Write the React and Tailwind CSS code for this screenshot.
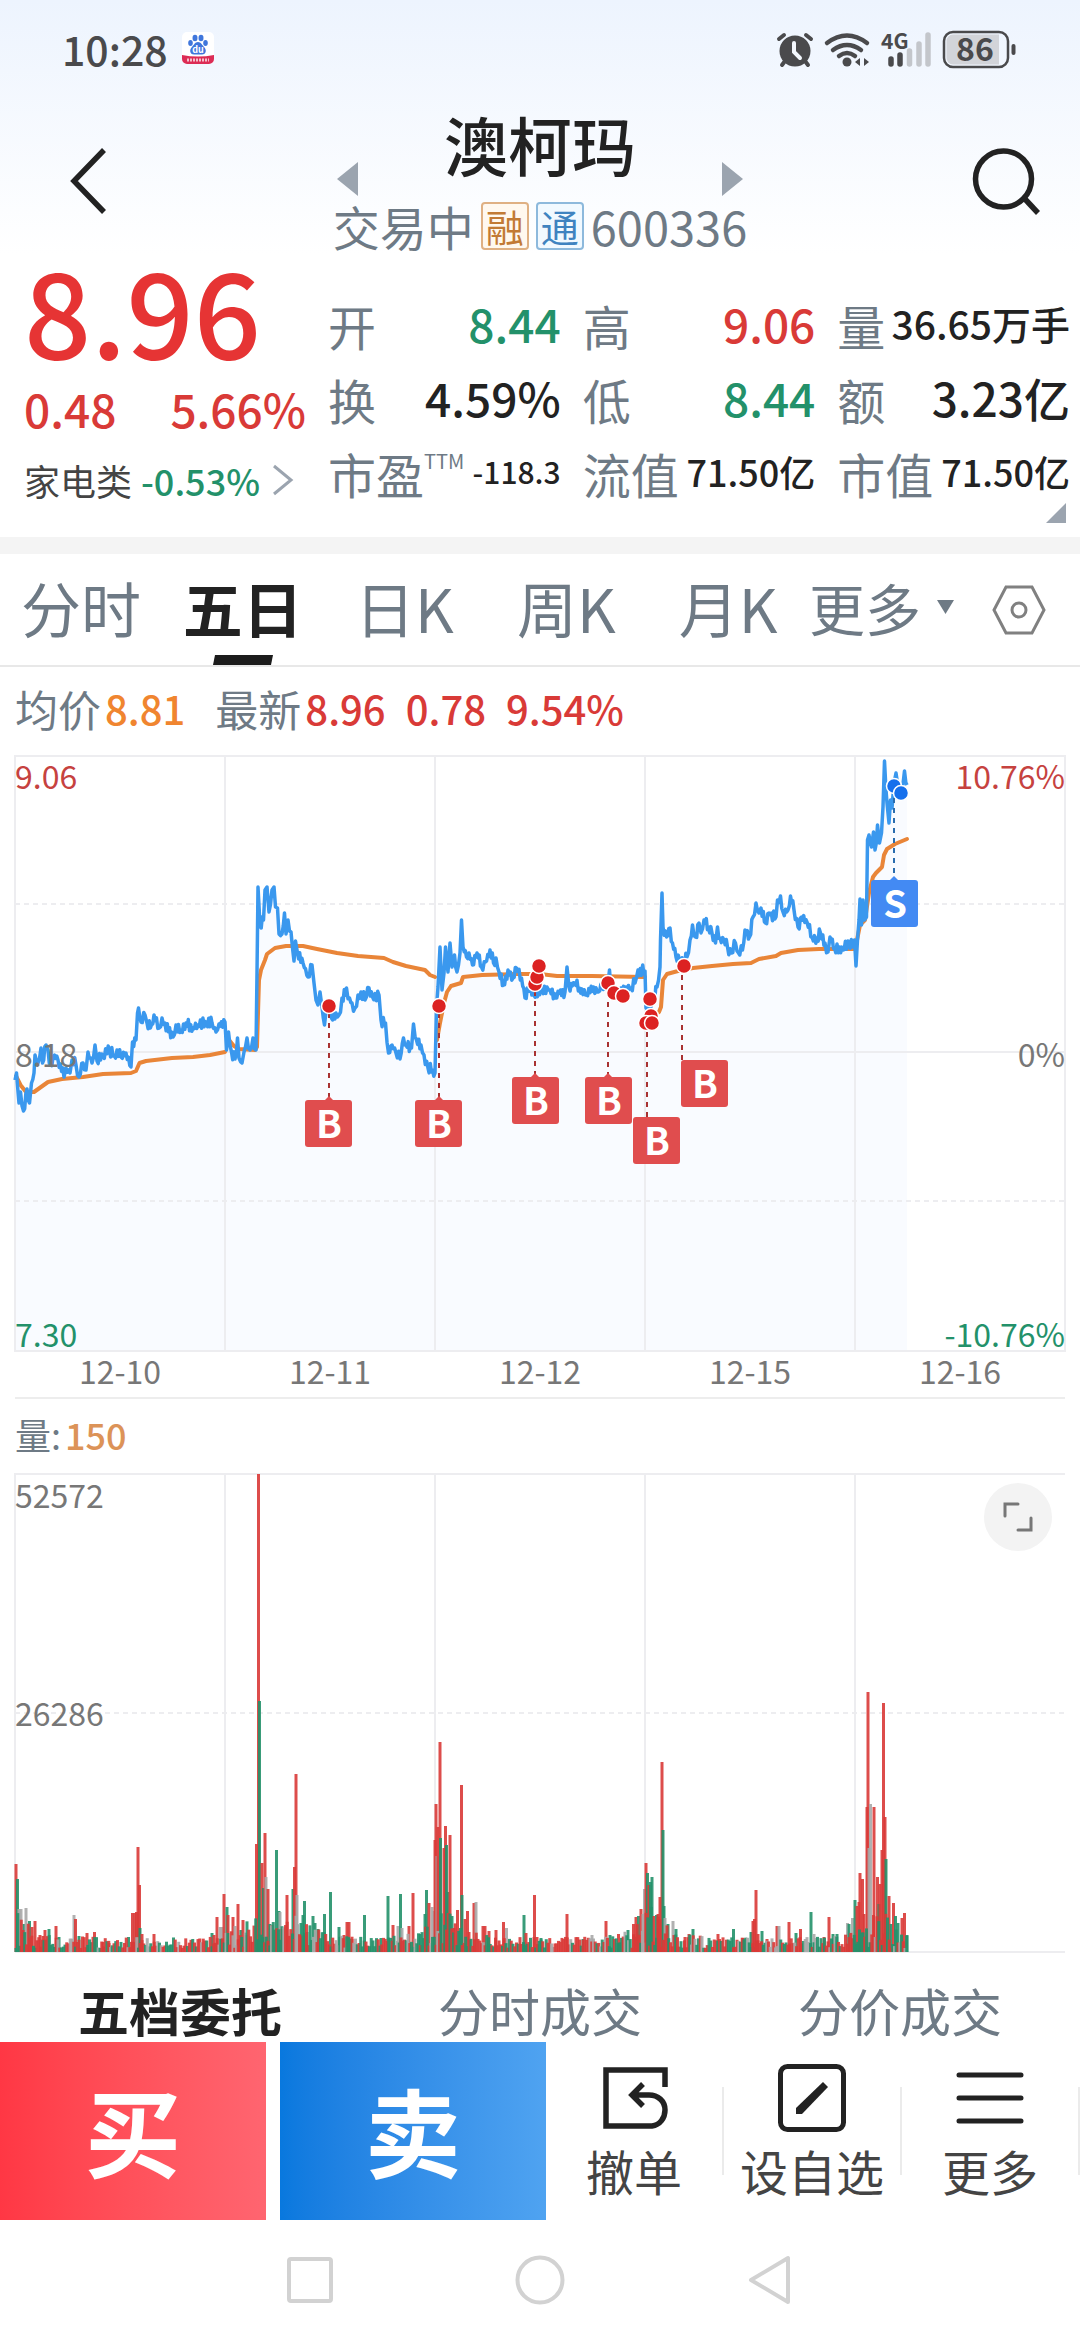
const RED = "#d93a37";
const GREEN = "#23916a";
const GRAY = "#a8a8a8";

const quotes = [
  { label: "开", value: "8.44", style: "text-[46px] text-[#23916a]" },
  { label: "高", value: "9.06", style: "text-[46px] text-[#d93a37]" },
  { label: "量", value: "36.65万手", style: "text-[39px] text-[#222222]" },
  { label: "换", value: "4.59%", style: "text-[46px] text-[#222222]" },
  { label: "低", value: "8.44", style: "text-[46px] text-[#23916a]" },
  { label: "额", value: "3.23亿", style: "text-[46px] text-[#222222]" },
  { label: "市盈", sup: "TTM", value: "-118.3", style: "text-[30px] text-[#222222]" },
  { label: "流值", value: "71.50亿", style: "text-[36px] text-[#222222]" },
  { label: "市值", value: "71.50亿", style: "text-[36px] text-[#222222]" },
];

const periods = ["分时", "五日", "日K", "周K", "月K"];
const dates = ["12-10", "12-11", "12-12", "12-15", "12-16"];
const gridX = [15, 225, 435, 645, 855, 1065];

const priceKeys =
  "15,324 16.5,317 19,347 20.5,336 23.5,355 27,333 29.5,347 31.5,327 34,317 35,299 38,307 41,292 42.5,307 46,289 48,294 50.5,309 54.5,299 58,304 64,321 66,312 70,317 72,304 76,309 79,321 83,307 86,314 88,296 92,307 95,289 97,305 103,299 109.5,294 114,299 117,294 121,301 126,297 131,311 132.5,286 136,284 137.5,257 138.5,252 141,266 145,259 147,267 151.5,269 154,259 159,272 162,262 165,267 173,281 176,269 181,274 186,267 193,272 198,269 206.5,267 212,267 216,276 219,268 225,266 " +
  "226.5,294 228.5,276 231.5,296 235,303 237.5,282 239,302 242,307 244,296 247,282 250,294 253,282 256,294 257,217 258,131 260,169 263.5,164 265,134 267,131 269,156 272,134 274,131 275.5,151 277.5,152 279,178 282,178 284.5,157 286,178 288,164 291,176 294,205 295.5,185 297.5,197 303,207 308,221 312,209 314,227 316,244 318,249 320,236 322,251 324.5,269 326.5,251 329,244 331.5,262 336,257 339,259 342,242 346.5,232 349.5,242 352,247 355,252 358,239 361,236 365,244 369,232 372.5,241 379,239 381,264 385.5,267 388.5,297 392,289 396,297 400,303 403.5,282 406,289 411.5,292 413.5,268 416.5,284 421,289 424,299 428,312 432.5,314 435,317 " +
  "436.5,251 438,231 440,191 442,234 444,217 445.5,191 448,216 450,187 452,211 454.5,199 457,216 460,197 461.5,164 463,191 466.5,201 469,197 472.5,209 477,197 481.5,211 485.5,206 490,194 493.5,207 496,202 499,216 503.5,229 508,214 513,222 516.5,212 521.5,222 525,242 528.5,231 534,239 542,234 547,231 550,234 555.5,242 560.5,234 565,236 567,211 569,231 574.5,227 579.5,232 586.5,239 593.5,231 598.5,236 602,229 607,224 609.5,214 611,234 616.5,239 621,232 626,231 631,232 635,227 638,214 645,215 " +
  "646,252 649.5,251 653.5,247 657,231 660,211 660.5,184 662,137 663,171 666.5,181 670,172 672.5,187 676,201 679.5,204 683.5,207 687,201 690,184 692.5,169 695.5,181 699,167 701,177 704,164 708.5,171 712,177 715.5,187 717.5,171 720,182 724,184 727.5,191 731.5,197 735.5,187 738.5,197 742.5,194 745,174 749.5,181 753,161 756,147 759,157 761,152 765.5,167 769,157 776,161 777.5,144 780.5,140 783,156 788,154 790.5,140 794,154 798,171 801.5,161 807,166 812,181 817,182 820.5,177 825,187 828,196 830,181 834.5,192 839.5,191 843,194 849,186 852.5,191 854.5,184 " +
  "856,210 857.5,184 859,164 860,143 861.5,169 863,144 864.5,164 866.5,161 867.5,84 869,79 871.5,91 873.5,76 875,94 877.5,69 879.5,87 881.5,77 883,51 884.5,5 886,34 887,47 889,67 890.5,44 892,52 894,27 896,17 898,31 901.5,34 904.5,15 907,29";

const averages = [
  "16,320 20.5,329 26,336 34,336 48,326 62,323 83,321 103,318 131,317 136,315 139.5,307 146,305 172,302 193,301 210,299 225,296",
  "229,284 234,290 239,293 255,294 257,291 259,224 261,214 265,204 267,198 275,192 286,190 303,190 317,193 337,197 358,200 384,202 393,206 406,210 425,214 430,219 435,221",
  "437,284 440,267 444,247 447,236 451,230 461,227 463,221 482,219 517,218 540,218 557,220 592,220 645,221",
  "646,264 659,256 661,251 663,224 667,218 678,215 693,212 712,210 733,208 751,207 759,203 776,200 781,197 798,194 819,193 856,193",
  "857,184 860,169 865,164 869,137 873,121 876,117 882,111 884,99 887,93 895,88 907,83",
];

// box position, pin x, pin start y, and whether the box has a tip
const trades = [
  { t: "B", x: 305, y: 344, pin: 329, from: 257, tip: true },
  { t: "B", x: 415, y: 344, pin: 439, from: 257, tip: true },
  { t: "B", x: 512, y: 321, pin: 535, from: 235, tip: true },
  { t: "B", x: 585, y: 321, pin: 608, from: 246, tip: true },
  { t: "B", x: 633, y: 361, pin: 647, from: 276 },
  { t: "B", x: 681, y: 304, pin: 682, from: 219 },
  { t: "S", x: 871, y: 124, pin: 894, from: 42, tip: true },
];

const buyDots = [
  [329, 250], [439, 250], [535, 228], [537, 221], [539, 210], [608, 227], [614, 237],
  [623, 240], [650, 243], [651, 260], [646, 267], [652, 267], [684, 210],
];
const sellDots = [[894, 30], [901, 37]];

const spikes = `16 88 r,17.5 73 g,19 43 n,21 43 n,24 28 g,26 44 n,29.5 31 g,32 25 r,35 31 r,40 17 r,43 16 r,45 22 r,49 23 g,56 26 r,59 15 g,74 37 n,75.5 33 r,79 16 g,87 19 r,94.5 20 r,103 10 r,109 9 r,128.5 15 g,132.5 39 r,135 39 r,136.5 40 r,138 105 r,139.5 67 r,140 24 g,142 18 r,154 18 r,
212 19 g,214 17 r,217 35 r,220 25 n,222 25 n,224 58 r,227 45 g,228 37 r,233 35 r,235 26 n,238 48 r,241 22 g,243 32 r,246 17 r,256.5 108 r,258.5 478 r,259.5 251 g,262 89 r,263.5 64 g,265 119 r,266 75 n,268 63 r,270 28 g,272 27 r,276.5 102 g,279 41 g,280 40 n,282 23 r,287 57 r,293 63 g,294.5 85 r,296 178 r,297 57 n,301 29 g,304.5 51 g,307 20 g,313 36 g,315 29 g,318 23 g,324.5 38 g,330.5 60 g,339 25 g,344 17 r,347 30 r,349 30 r,352 13 r,364.5 37 g,381 14 g,388 56 g,393 27 r,398 26 n,400.5 58 g,402 24 n,409 26 r,413 59 r,420 18 g,425 38 g,426.5 62 g,429 49 r,432 45 n,434 41 n,
435 112 r,436 148 r,437 96 n,438 125 r,440 210 r,440.5 114 g,444 104 r,445.5 126 r,446.5 107 g,448 60 g,450 117 r,452 36 g,454 24 r,457.5 42 r,461.5 167 r,462 57 g,465 33 r,467.5 41 r,469 20 r,474 49 r,476 50 n,483 26 r,485 26 r,489 21 r,496 22 r,503.5 30 r,506.5 24 n,524 37 g,526 19 r,534.5 57 r,537 15 r,541 14 g,567 38 r,583 13 g,592 17 n,606 31 r,610 17 g,618.5 18 r,623 14 r,628 22 g,633.5 28 r,636 35 r,638.5 36 g,641 43 r,643 38 n,
644.5 63 n,646 89 r,647.5 79 g,649 67 r,650.5 70 g,652 75 g,653.5 36 r,656.5 37 g,658 38 r,660 55 r,662 190 r,663 122 g,664 46 g,665 34 n,668 28 g,673 31 n,676 23 g,685 15 r,689 18 r,693 23 g,718 18 r,733.5 23 g,743 14 r,751 20 g,753 31 r,754.5 33 r,756 62 r,758 18 r,762 21 g,767 13 r,777 26 r,779 26 n,789 30 r,796 19 g,800.5 23 r,811 40 g,814 18 n,824 15 r,829 35 r,833 18 g,837 18 g,847.5 29 n,849 28 g,852.5 34 n,
855 52 g,857 46 r,859 50 r,860 79 r,862.5 73 r,864 38 r,867 145 r,868 260 r,869 104 n,870.5 148 n,874 145 r,877.5 75 r,879 48 g,880 68 r,882 102 r,883.5 249 r,885 135 r,886 93 g,889 56 r,891 28 g,893.5 49 r,895.5 36 g,898 29 g,902 34 r,904.5 39 r,907 17 g`
  .split(",")
  .map((s) => {
    const [x, h, c] = s.trim().split(" ");
    return { x: Number(x), h: Number(h), c };
  });

const barColor = { r: RED, g: GREEN, n: GRAY };

function makeRandom(seed) {
  return () => {
    seed = (seed * 16807) % 2147483647;
    return seed / 2147483647;
  };
}

// adds tick noise between the key prices
function makePrice() {
  const rand = makeRandom(5);
  const keys = priceKeys.split(" ").map((p) => p.split(",").map(Number));
  const out = [];
  keys.forEach(([x, y], i) => {
    out.push(`${x},${y}`);
    const next = keys[i + 1];
    if (!next) return;
    const steps = Math.floor((next[0] - x) / 1.1);
    for (let s = 1; s < steps; s++) {
      const k = s / steps;
      const noise = (s % 2 ? 1 : -1) * (1 + rand() * 5);
      out.push(`${(x + (next[0] - x) * k).toFixed(1)},${(y + (next[1] - y) * k + noise).toFixed(1)}`);
    }
  });
  return out.join(" ");
}

// low background turnover between the spikes, higher around each open
function makeBase() {
  const list = [];
  const rand = makeRandom(17);
  for (let x = 16; x < 908; x += 1.75) {
    const near = Math.min(...[15, 260, 300, 445, 650, 880].map((o) => Math.abs(x - o)));
    const top = 11 + 36 * Math.exp(-near / 16);
    list.push({ x, h: 4 + rand() * top, c: "rgnrgr"[Math.floor(rand() * 6)] });
  }
  return list;
}

const price = makePrice();
const bars = [...spikes, ...makeBase()];

function StatusBar() {
  return (
    <div className="flex h-[100px] items-center justify-between pl-[62px] pr-[64px] text-[#4a4a4c]">
      <div className="flex items-center gap-[14px] pb-1">
        <span className="text-[41px] leading-[60px] font-medium">10:28</span>
        <svg width="32" height="32" viewBox="0 0 32 32" className="overflow-visible">
          <rect width="32" height="32" rx="5" fill="#fff" />
          <g fill="#3f76dc">
            <ellipse cx="13" cy="6" rx="2.5" ry="3.2" />
            <ellipse cx="19" cy="6" rx="2.5" ry="3.2" />
            <ellipse cx="8.5" cy="11" rx="2.3" ry="3" />
            <ellipse cx="23.5" cy="11" rx="2.3" ry="3" />
            <path d="M16 10c3 0 4 3 6.500 5.500 2 2 2 7-2.500 7h-8c-4.500 0-4.500-5-2.500-7C12 13 13 10 16 10z" />
          </g>
          <text x="16" y="20.5" fontSize="9" fontWeight="700" textAnchor="middle" fill="#fff">du</text>
          <path d="M0 23q16 3 32 0v4a5 5 0 0 1-5 5H5a5 5 0 0 1-5-5z" fill="#dc2c55" />
          <path d="M5 28h22" stroke="#fff" strokeWidth="3" strokeDasharray="2 1" opacity=".7" />
        </svg>
      </div>
      <svg width="240" height="40" viewBox="775 31 240 40" fill="none" stroke="#4a4a4c" strokeLinecap="round" className="overflow-visible">
        <circle cx="794" cy="52" r="15.5" fill="#4a4a4c" stroke="none" />
        <path d="M778 40l5-4M810 40l-5-4M784 62l-3 4M804 62l3 4" strokeWidth="4" />
        <path d="M793 44v9l6 6" stroke="#f3f7fd" strokeWidth="4" />
        <path d="M826 44q20-15 40 0M832 51q14-10 28 0M838 57q8-6 16 0" strokeWidth="4.5" />
        <circle cx="846" cy="63" r="4.5" fill="#4a4a4c" stroke="none" />
        <path d="M859 59v8l-5-4zM863 59l5 4-5 4z" fill="#4a4a4c" stroke="none" />
        <text x="880" y="50" fontSize="21" fontWeight="700" fill="#4a4a4c" stroke="none">4G</text>
        <path d="M890 60v5M899 56v9" strokeWidth="5.5" />
        <path d="M908.500 52v13M918 45v20M927 36v29" stroke="#c3c6cb" strokeWidth="5.500" />
        <rect x="943" y="33" width="64" height="35" rx="9" strokeWidth="2.5" />
        <path d="M952 35.500h46v30h-46a6.500 6.500 0 0 1-6.500-6.500V42a6.500 6.500 0 0 1 6.500-6.500z" fill="#d2d4d9" stroke="none" />
        <text x="974" y="62" fontSize="32" fontWeight="700" textAnchor="middle" fill="#4a4a4c" stroke="none">86</text>
        <path d="M1012.500 47v7" strokeWidth="4" />
      </svg>
    </div>
  );
}

function TitleBar() {
  return (
    <header className="flex justify-between px-[38px] pt-[7px]">
      <button aria-label="返回" className="flex w-[96px] items-center justify-start pl-[31px]">
        <svg width="40" height="68" viewBox="0 0 40 68" fill="none" stroke="#222" strokeWidth="5.5">
          <path d="M35 3L5 34l30 31" />
        </svg>
      </button>
      <div className="flex flex-col items-center">
        <div className="flex h-[89px] w-[406px] items-end justify-between">
          <button aria-label="上一只">
            <svg width="21" height="34" viewBox="0 0 21 34" fill="#9ba4af" className="block">
              <path d="M21 0v34L0 17z" />
            </svg>
          </button>
          <h1 className="self-start text-[64px] leading-[72px] font-medium text-[#222222]">澳柯玛</h1>
          <button aria-label="下一只">
            <svg width="21" height="34" viewBox="0 0 21 34" fill="#9ba4af" className="block">
              <path d="M0 0v34l21-17z" />
            </svg>
          </button>
        </div>
        <div className="mt-[2px] flex h-[56px] items-center gap-[7px] text-[47px] leading-[56px] text-[#6e7a85]">
          <span>交易中</span>
          <span className="flex h-[48px] w-[48px] items-center justify-center rounded-[4px] border-2 border-[#dfb083] bg-[#fff8ef] text-[38px] leading-[40px] text-[#c27a35]">融</span>
          <span className="flex h-[48px] w-[48px] items-center justify-center rounded-[4px] border-2 border-[#8db9dc] bg-[#f1f9ff] text-[38px] leading-[40px] text-[#3f83c0]">通</span>
          <span>600336</span>
        </div>
      </div>
      <button aria-label="搜索" className="flex w-[96px] items-center justify-end">
        <svg width="70" height="70" viewBox="0 0 70 70" fill="none" stroke="#222" strokeWidth="5.5">
          <circle cx="31.5" cy="33" r="28" />
          <path d="M52 52l14 15" />
        </svg>
      </button>
    </header>
  );
}

function QuotePanel() {
  return (
    <section className="relative flex h-[283px] pr-[10px]">
      <div className="w-[328px] shrink-0 pl-[24px] pt-[6px] font-medium text-[#e63434]">
        <div className="text-[118px] leading-[96px]">8.96</div>
        <div className="mt-6 flex gap-[54px] text-[46px] leading-[56px] text-[#d93a37]">
          <span>0.48</span>
          <span>5.66%</span>
        </div>
        <a href="#sector" className="mt-5 flex items-center text-[36px] leading-[48px] font-normal text-[#444444]">
          <span>家电类</span>
          <span className="ml-[9px] font-medium text-[#23916a]">-0.53%</span>
          <svg width="22" height="32" viewBox="0 0 22 32" fill="none" stroke="#9ba4af" strokeWidth="3" className="ml-3">
            <path d="M2 2l17 14L2 30" />
          </svg>
        </a>
      </div>
      <dl className="grid flex-1 grid-cols-3 content-start gap-x-[22px] pt-[34px]">
        {quotes.map((q) => (
          <div key={q.label} className="flex h-[74px] items-center justify-between whitespace-nowrap">
            <dt className="flex text-[48px] leading-[56px] text-[#6e7a85]">
              {q.label}
              {q.sup && <span className="text-[20px] leading-[32px]">{q.sup}</span>}
            </dt>
            <dd className={`pb-1 leading-[56px] font-medium ${q.style}`}>{q.value}</dd>
          </div>
        ))}
      </dl>
      <svg width="20" height="20" viewBox="0 0 20 20" fill="#9ba4af" className="absolute right-[14px] bottom-[14px]">
        <path d="M20 0v20H0z" />
      </svg>
    </section>
  );
}

function PeriodTabs() {
  return (
    <nav className="flex h-[113px] border-b-2 border-[#e8e8e8] text-[60px] leading-[72px] text-[#6e7a85]">
      <div className="flex flex-1">
        {periods.map((p) => {
          const active = p === "五日";
          return (
            <button key={p} className={`relative flex-1 pb-[6px] whitespace-nowrap ${active ? "font-bold text-[#222222]" : ""}`}>
              {p}
              {active && (
                <svg width="60" height="10" viewBox="0 0 60 10" className="absolute bottom-0 left-1/2 -translate-x-1/2">
                  <path d="M2 0h58l-2 10H0z" fill="#1c1c1c" />
                </svg>
              )}
            </button>
          );
        })}
      </div>
      <div className="flex w-[271px] items-center justify-between pr-[34px]">
        <button className="flex items-center gap-4 pb-[6px] text-[56px] leading-[72px]">
          更多
          <svg width="17" height="14" viewBox="0 0 17 14" fill="#6e7a85">
            <path d="M0 0h17L8.500 14z" />
          </svg>
        </button>
        <button aria-label="设置">
          <svg width="54" height="50" viewBox="0 0 54 50" fill="none" stroke="#808080" strokeWidth="3" className="block">
            <path d="M14 2h26l12 23-12 23H14L2 25z" />
            <circle cx="27" cy="25" r="7" />
          </svg>
        </button>
      </div>
    </nav>
  );
}

function PriceChart() {
  return (
    <svg viewBox="0 -2 1080 600" className="block w-full overflow-visible" fill="none">
      <polygon points={`15,595 ${price} 907,595`} fill="#f9fbff" />
      <g stroke="#ededf0" strokeWidth="2">
        <rect x="15" y="0" width="1050" height="595" />
        {gridX.slice(1, 5).map((x) => (
          <path key={x} d={`M${x} 0V595`} />
        ))}
        <path d="M15 296H1065" />
        <path d="M15 148H1065M15 445H1065" strokeDasharray="5 4" />
      </g>
      {averages.map((points) => (
        <polyline key={points} points={points} stroke="#e98538" strokeWidth="4" strokeLinejoin="round" strokeLinecap="round" />
      ))}
      <polyline points={price} stroke="#3a98ee" strokeWidth="3.5" strokeLinejoin="round" />
      <g fontSize="32" fill="#777">
        <text x="15" y="33" fill="#c6423f">9.06</text>
        <text x="15" y="311">8.18</text>
        <text x="15" y="591" fill={GREEN}>7.30</text>
        <g textAnchor="end">
          <text x="1065" y="33" fill="#c6423f">10.76%</text>
          <text x="1065" y="311">0%</text>
          <text x="1065" y="591" fill={GREEN}>-10.76%</text>
        </g>
      </g>
      {trades.map((d) => {
        const fill = d.t === "B" ? "#e04d4e" : "#438af3";
        return (
          <g key={d.x}>
            <path d={`M${d.pin} ${d.from}V${d.y}`} stroke={d.t === "B" ? "#a83232" : "#2a6cae"} strokeWidth="2" strokeDasharray="5 5" />
            {d.tip && <path d={`M${d.pin - 4} ${d.y}l4-4 4 4z`} fill={fill} />}
            <rect x={d.x} y={d.y} width="47" height="47" rx="3" fill={fill} />
            <text x={d.x + 24} y={d.y + 38} fontSize="38" fontWeight="700" textAnchor="middle" fill="#fff">{d.t}</text>
          </g>
        );
      })}
      <g stroke="#fff" strokeWidth="1.5">
        {buyDots.map(([x, y], i) => (
          <circle key={i} cx={x} cy={y} r="7.5" fill="#dc2222" />
        ))}
        {sellDots.map(([x, y], i) => (
          <circle key={i} cx={x} cy={y} r="7.5" fill="#1670ec" />
        ))}
      </g>
    </svg>
  );
}

function VolumeChart() {
  return (
    <div className="relative">
      <svg viewBox="0 -2 1080 482" className="block w-full overflow-visible" fill="none">
        <g stroke="#ededf0" strokeWidth="2">
          <path d="M15 478V0H1065M15 478H1065" />
          {gridX.slice(1, 5).map((x) => (
            <path key={x} d={`M${x} 0V478`} />
          ))}
          <path d="M15 239H1065" strokeDasharray="5 4" />
        </g>
        {bars.map((b, i) => (
          <rect key={i} x={b.x - 1.5} y={478 - b.h} width="3" height={b.h} fill={barColor[b.c]} opacity=".9" />
        ))}
        <g fontSize="32" fill="#777">
          <text x="15" y="34">52572</text>
          <text x="15" y="252">26286</text>
        </g>
      </svg>
      <button aria-label="全屏" className="absolute top-[11px] right-[28px] flex h-[68px] w-[68px] items-center justify-center rounded-full bg-[#f3f3f3]">
        <svg width="32" height="32" viewBox="0 0 32 32" fill="none" stroke="#777" strokeWidth="3" strokeLinecap="round">
          <path d="M3 15V3h13M29 17v12H16" />
        </svg>
      </button>
    </div>
  );
}

function ActionBar() {
  return (
    <div className="flex h-[178px]">
      <button className="w-[266px] bg-linear-to-r from-[#ff3744] to-[#ff6570] pb-1 text-[96px] leading-[120px] font-bold text-white">买</button>
      <button className="ml-[14px] w-[266px] bg-linear-to-r from-[#0878de] to-[#4fa3f1] pb-1 text-[96px] leading-[120px] font-bold text-white">卖</button>
      <div className="flex flex-1 items-center text-[48px] leading-[56px] text-[#444444]">
        <button className="flex h-[134px] flex-1 flex-col items-center justify-between">
          <svg width="68" height="68" viewBox="0 0 68 68" fill="none" stroke="#222" strokeWidth="5.5">
            <path d="M65 23V6H6v56h46c8-1 13-8 13-16 0-9-7-15-16-15H32M43 20L32 31l11 11" />
          </svg>
          撤单
        </button>
        <span className="h-[88px] w-[2px] bg-[#ebebeb]" />
        <button className="flex h-[134px] flex-1 flex-col items-center justify-between whitespace-nowrap">
          <svg width="68" height="68" viewBox="0 0 68 68" fill="none" stroke="#222" strokeWidth="5">
            <rect x="2.5" y="2.5" width="63" height="63" rx="7" />
            <path d="M18 50v-6l27-26 5 5-26 27z" fill="#222" stroke="none" />
          </svg>
          设自选
        </button>
        <span className="h-[88px] w-[2px] bg-[#ebebeb]" />
        <button className="flex h-[134px] flex-1 flex-col items-center justify-between">
          <svg width="68" height="68" viewBox="0 0 68 68" fill="none" stroke="#222" strokeWidth="5" strokeLinecap="round">
            <path d="M3 11h62M3 34h62M3 57h62" />
          </svg>
          更多
        </button>
        <span className="h-[88px] w-[2px] bg-[#ebebeb]" />
      </div>
    </div>
  );
}

export default function App() {
  return (
    <div className="flex min-h-screen flex-col bg-white font-['Noto_Sans_CJK_SC',sans-serif]">
      <div className="bg-linear-to-b from-[#edf4fe] to-white">
        <StatusBar />
        <TitleBar />
      </div>
      <QuotePanel />
      <div className="h-[17px] bg-[#f4f4f4]" />
      <PeriodTabs />

      <div className="flex h-[87px] items-center pb-[6px] pl-[15px] text-[40px] leading-[48px] font-medium text-[#d93a37]">
        <span className="text-[43px] font-normal text-[#6e7a85]">均价</span>
        <span className="ml-1 text-[#f0852f]">8.81</span>
        <span className="ml-[30px] text-[43px] font-normal text-[#6e7a85]">最新</span>
        <span className="ml-1">8.96</span>
        <span className="ml-5">0.78</span>
        <span className="ml-5">9.54%</span>
      </div>
      <PriceChart />
      <div className="mx-[15px] flex border-b-2 border-[#ededed] pb-[11px] text-[32px] leading-[32px] text-[#777777]">
        {dates.map((d) => (
          <span key={d} className="flex-1 text-center">{d}</span>
        ))}
      </div>
      <div className="flex h-[73px] items-center pb-1 pl-[15px] text-[36px] leading-[48px] text-[#6e7a85]">
        量:<span className="ml-1 font-medium text-[#dc9358]">150</span>
      </div>
      <VolumeChart />

      <div className="flex pt-6 text-[51px] leading-[64px] text-[#6e7a85]">
        <button className="flex-1 font-bold text-[#222222]">五档委托</button>
        <button className="flex-1">分时成交</button>
        <button className="flex-1">分价成交</button>
      </div>
      <ActionBar />

      <div className="flex flex-1 items-center justify-center gap-[180px]">
        <button aria-label="最近任务">
          <svg width="50" height="50" viewBox="0 0 50 50" fill="none" stroke="#d2d2d2" strokeWidth="4" className="block">
            <rect x="4" y="4" width="42" height="42" rx="2" />
          </svg>
        </button>
        <button aria-label="主屏幕">
          <svg width="50" height="50" viewBox="0 0 50 50" fill="none" stroke="#d2d2d2" strokeWidth="4" className="block">
            <circle cx="25" cy="25" r="22.5" />
          </svg>
        </button>
        <button aria-label="返回上一页">
          <svg width="50" height="50" viewBox="0 0 50 50" fill="none" stroke="#d2d2d2" strokeWidth="4" strokeLinejoin="round" className="block">
            <path d="M43 3v44L6 25z" />
          </svg>
        </button>
      </div>
    </div>
  );
}
